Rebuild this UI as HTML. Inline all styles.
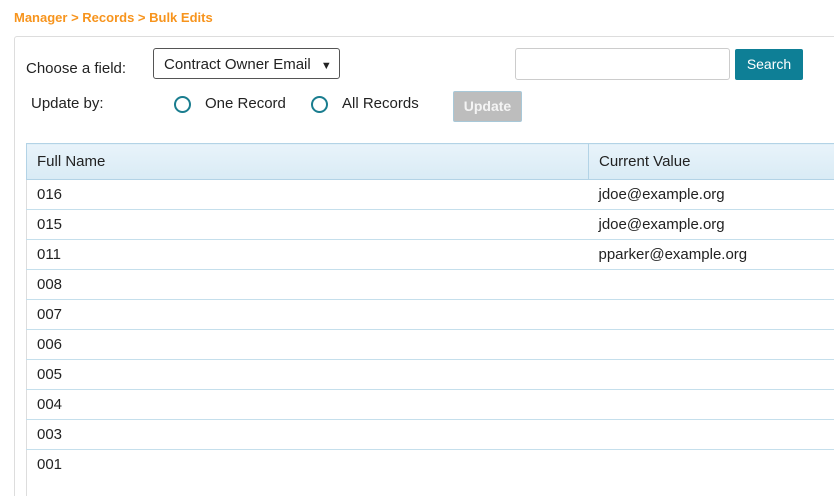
<!DOCTYPE html>
<html style="width:834px;height:496px;overflow:hidden"><head><style>
body{margin:0;width:834px;height:496px;overflow:hidden;background:#fff;font-family:"Liberation Sans",sans-serif;color:#222;position:relative}
.a{position:absolute}
.bc{left:14px;top:10px;font-size:13px;font-weight:bold;color:#f7941d}
.panel{left:14px;top:36px;width:840px;height:480px;border:1px solid #ddd;border-radius:3px}
.lbl{font-size:15px;color:#222}
.sel{left:153px;top:48px;width:187px;height:31px;border:1px solid #555;border-radius:3px;box-sizing:border-box;font-size:15px;line-height:31px;padding-left:10px}
.radio{width:13px;height:13px;border:2.5px solid #1a7d8f;border-radius:50%}
.inp{left:515px;top:48px;width:215px;height:32px;border:1px solid #ccc;border-radius:3px;box-sizing:border-box}
.btn{left:735px;top:49px;width:68px;height:31px;background:#0e7f96;border-radius:2px;color:#fff;font-size:14px;text-align:center;line-height:31px}
.upd{left:453px;top:91px;width:69px;height:31px;background:#bdbdbd;border:1px solid #a8c8d8;box-sizing:border-box;border-radius:2px;color:#f4f4f4;font-size:14px;font-weight:bold;text-align:center;line-height:29px}
table{position:absolute;left:26px;top:143px;border-collapse:collapse;width:820px;font-size:15px}
th{height:36px;background:linear-gradient(#e8f3fa,#d9ebf5);font-weight:normal;text-align:left;padding:0 0 0 10px;border:1px solid #b3d3e6;box-sizing:border-box}
td{height:30px;padding:0 0 0 10px;border-bottom:1px solid #c5dfec;box-sizing:border-box}
tr td:first-child{border-left:1px solid #ddd}
</style></head><body>
<div class="a bc">Manager &gt; Records &gt; Bulk Edits</div>
<div class="a panel"></div>
<div class="a lbl" style="left:26px;top:60px">Choose a field:</div>
<div class="a sel">Contract Owner Email <span style="font-size:11px;margin-left:6px">▼</span></div>
<div class="a inp"></div>
<div class="a btn">Search</div>
<div class="a lbl" style="left:31px;top:95px">Update by:</div>
<div class="a radio" style="left:174px;top:96px"></div>
<div class="a lbl" style="left:205px;top:95px">One Record</div>
<div class="a radio" style="left:311px;top:96px"></div>
<div class="a lbl" style="left:342px;top:95px">All Records</div>
<div class="a upd">Update</div>
<table>
<tr><th style="width:562px">Full Name</th><th>Current Value</th></tr>
<tr><td>016</td><td>jdoe@example.org</td></tr>
<tr><td>015</td><td>jdoe@example.org</td></tr>
<tr><td>011</td><td>pparker@example.org</td></tr>
<tr><td>008</td><td></td></tr>
<tr><td>007</td><td></td></tr>
<tr><td>006</td><td></td></tr>
<tr><td>005</td><td></td></tr>
<tr><td>004</td><td></td></tr>
<tr><td>003</td><td></td></tr>
<tr><td style="border-bottom:none;height:60px;vertical-align:top;padding-top:6px">001</td><td style="border-bottom:none"></td></tr>
</table>
</body></html>
